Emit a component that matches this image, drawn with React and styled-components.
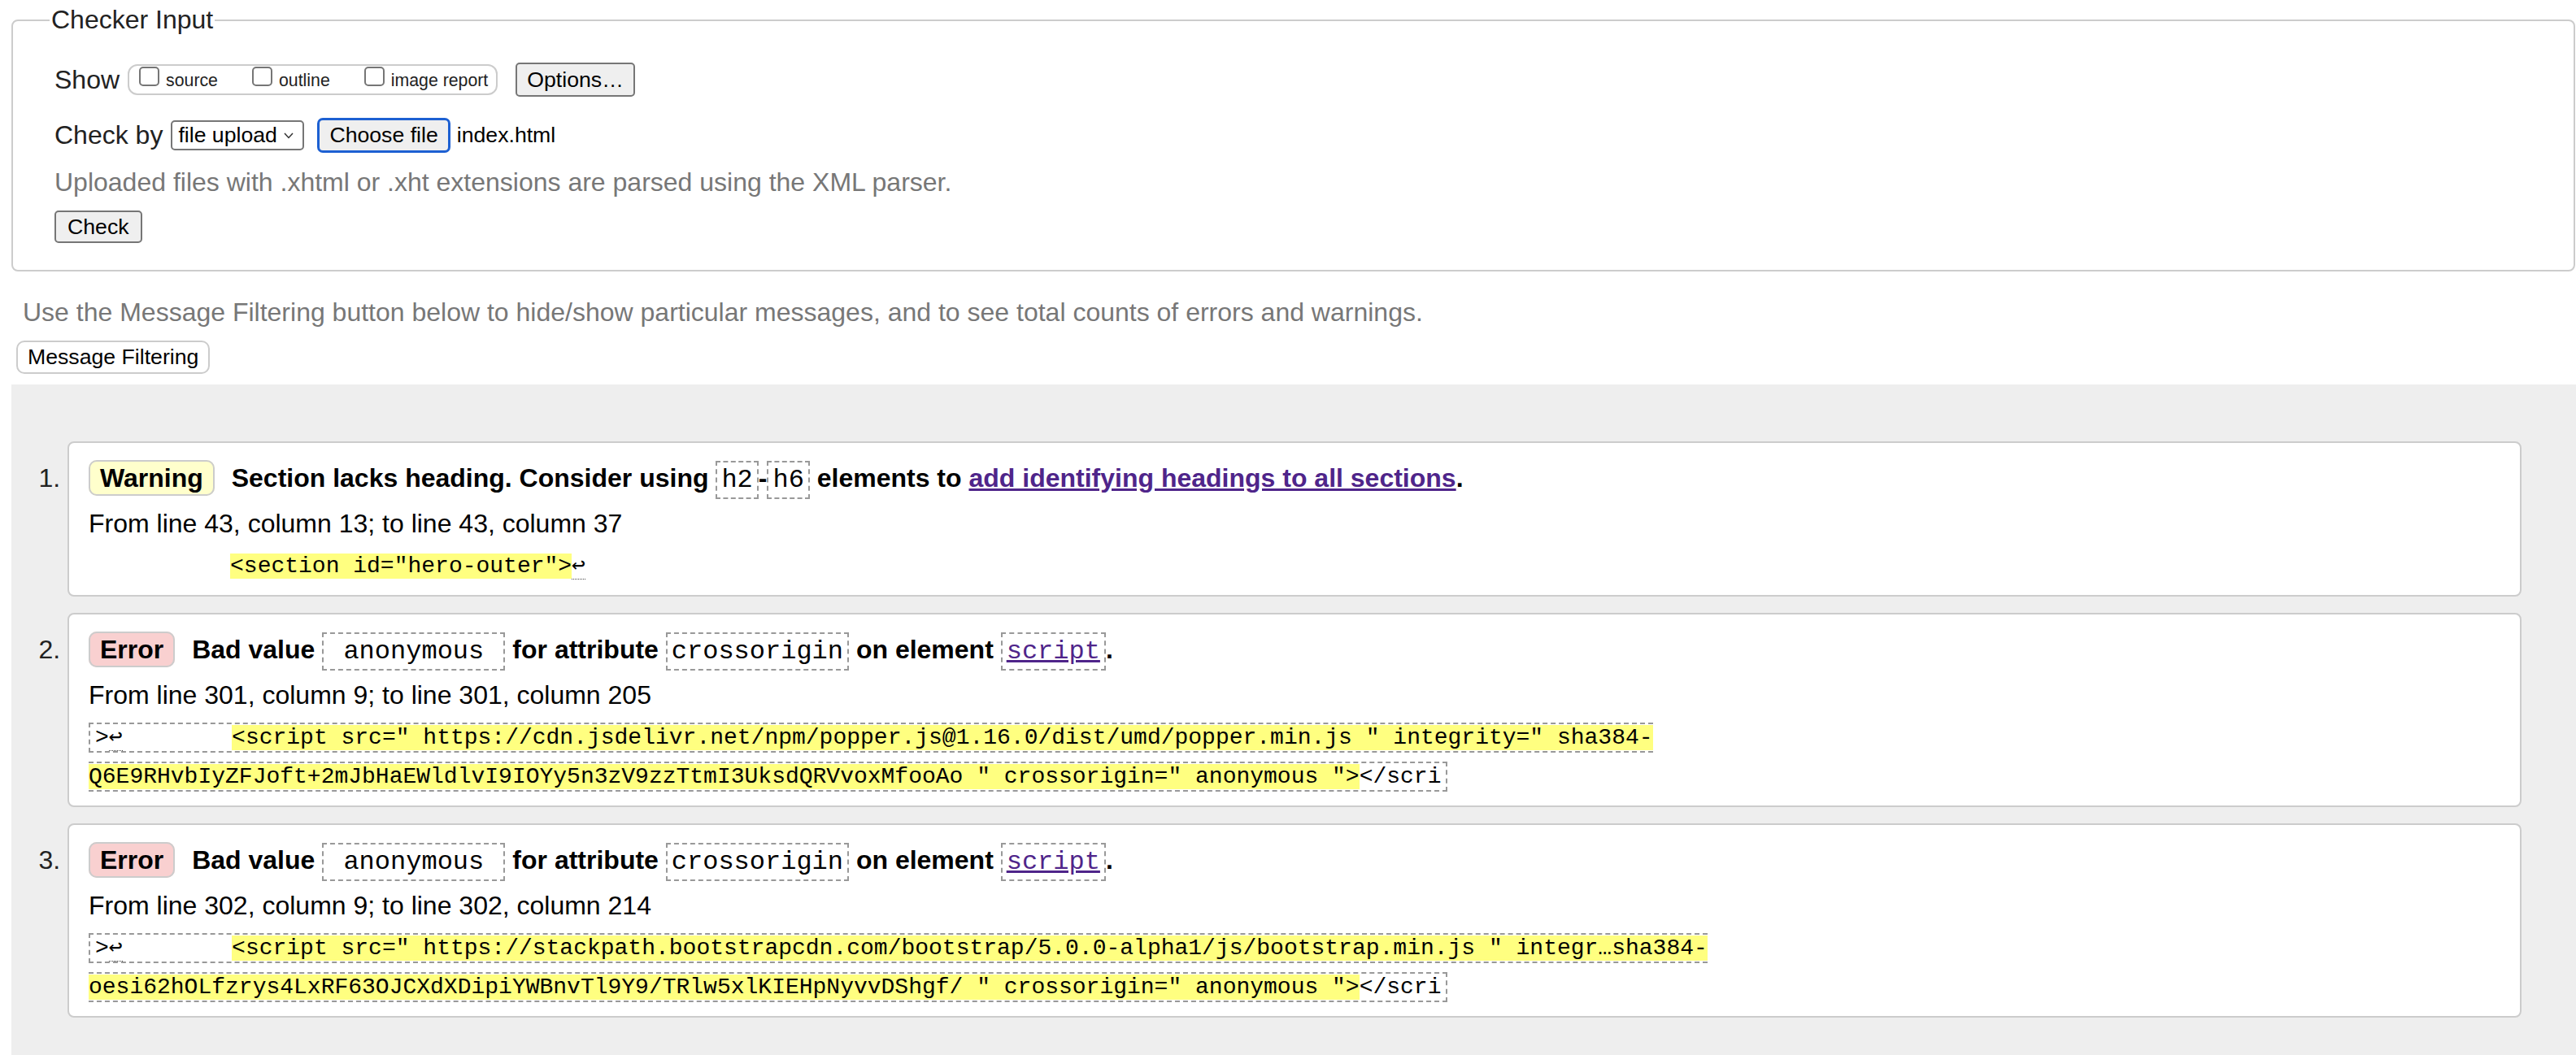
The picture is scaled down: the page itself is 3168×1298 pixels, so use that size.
import React from 'react';
import styled, { createGlobalStyle } from 'styled-components';

const GlobalStyle = createGlobalStyle`
  html, body {
    margin: 0;
    padding: 0;
    background: #fff;
  }
  body {
    font-family: "Liberation Sans", Arial, Helvetica, sans-serif;
    font-size: 32px;
    color: #222;
  }
`;

const MONO = '"Liberation Mono", "DejaVu Sans Mono", monospace';

const Page = styled.div`
  display: flex;
  flex-direction: column;
  padding: 6px 0 0 14px;
`;

// Checker input form
const InputFieldset = styled.fieldset`
  margin: 0 1px 0 0;
  padding: 34px 0 33px 51px;
  border: 2px solid #ccc;
  border-radius: 8px;
  min-width: 0;
`;

const Legend = styled.legend`
  margin-left: -6px;
  padding: 0 2px;
  font-size: 32px;
  line-height: 37px;
`;

const FormRow = styled.div`
  display: flex;
  align-items: center;
  height: ${({ h }) => h}px;
  margin-bottom: ${({ mb }) => mb || 0}px;
`;

const RowLabel = styled.span`
  font-size: 32px;
  line-height: 37px;
  margin-right: ${({ gap }) => gap}px;
`;

const CheckGroup = styled.div`
  display: flex;
  align-items: flex-start;
  box-sizing: border-box;
  height: 38px;
  padding: 1px 10px 0 12px;
  border: 2px solid #ccc;
  border-radius: 12px;
`;

const CheckLabel = styled.label`
  display: flex;
  align-items: flex-start;
  margin-right: ${({ last }) => (last ? 0 : 42)}px;
  font-size: 21.3px;
  line-height: 24px;
  color: #222;
`;

const CheckBox = styled.span`
  display: block;
  box-sizing: border-box;
  width: 25px;
  height: 24px;
  margin-right: 8px;
  border: 2px solid #767676;
  border-radius: 5px;
  background: #fff;
`;

const CheckText = styled.span`
  margin-top: 5px;
`;

const NativeButton = styled.button`
  box-sizing: border-box;
  height: ${({ h }) => h}px;
  margin-left: ${({ ml }) => ml || 0}px;
  padding: 0 ${({ px }) => px || 12}px;
  font-family: "Liberation Sans", Arial, sans-serif;
  font-size: 26.67px;
  color: #000;
  background: #efefef;
  border: 2px solid #767676;
  border-radius: 5px;
`;

const FocusButton = styled(NativeButton)`
  border: 3px solid #1d60d2;
  border-radius: 7px;
`;

const SelectBox = styled.div`
  display: flex;
  align-items: center;
  justify-content: space-between;
  box-sizing: border-box;
  width: 164px;
  height: 37px;
  padding: 0 11px 0 7px;
  border: 2px solid #767676;
  border-radius: 5px;
  background: #fff;
  font-size: 26.67px;
  color: #000;
`;

const FileName = styled.span`
  margin-left: 8px;
  font-size: 26.67px;
  color: #000;
`;

const Hint = styled.div`
  font-size: 32px;
  line-height: 37px;
  color: #777;
  margin-bottom: ${({ mb }) => mb}px;
`;

// Message filtering
const FilterNote = styled.p`
  margin: 32px 0 0 14px;
  font-size: 32px;
  line-height: 37px;
  color: #777;
`;

const FilterButton = styled.button`
  align-self: flex-start;
  box-sizing: border-box;
  height: 41px;
  margin: 16px 0 13px 6px;
  padding: 0 12px;
  font-family: "Liberation Sans", Arial, sans-serif;
  font-size: 26.67px;
  color: #000;
  background: #fff;
  border: 2px solid #ccc;
  border-radius: 10px;
`;

// Results
const Results = styled.div`
  box-sizing: border-box;
  min-height: 823px;
  padding: 70px 67px 40px 69px;
  background: #eee;
`;

const MessageList = styled.ol`
  margin: 0;
  padding: 0;
  list-style: decimal outside;
`;

const Card = styled.li`
  margin-bottom: 20px;
  padding: 19px 24px 11px;
  background: #fff;
  border: 2px solid #ccc;
  border-radius: 8px;
  color: #000;
  font-size: 32px;

  &::marker {
    color: #222;
  }
`;

const Heading = styled.p`
  margin: 0;
  font-weight: bold;
  line-height: 48px;
`;

const Badge = styled.strong`
  margin-right: 12px;
  padding: 2px 12px;
  background: ${({ kind }) => (kind === 'error' ? '#f9d0d0' : '#ffffcc')};
  border: 2px solid #ccc;
  border-radius: 10px;
`;

const Code = styled.code`
  padding: 3px 5px;
  font-family: ${MONO};
  font-size: 32px;
  font-weight: normal;
  white-space: pre;
  border: 2px dashed #999;
`;

const Link = styled.a`
  color: #4f258a;
  text-decoration: underline;
`;

const Location = styled.p`
  margin: 5px 0 0;
  line-height: 48px;
`;

const Extract = styled.p`
  margin: 5px 0 0;
  font-family: ${MONO};
  font-size: 28px;
  line-height: 48px;
  white-space: pre;
`;

const ExtractBox = styled.code`
  font-family: inherit;
  padding: 1px 6px;
  border: ${({ framed }) => (framed ? '2px dashed #999' : 'none')};
`;

const Mark = styled.b`
  font-weight: normal;
  background: #ffff80;
`;

const LineFeed = styled.span`
  border-bottom: 1px dotted #444;
`;

const Chevron = () => (
  <svg width="12" height="8" viewBox="0 0 12 8">
    <polyline points="1,1 6,6.5 11,1" fill="none" stroke="#333" strokeWidth="1.5" />
  </svg>
);

const crossOriginErrors = [
  {
    from: 'From line 301, column 9; to line 301, column 205',
    first: '<script src=" https://cdn.jsdelivr.net/npm/popper.js@1.16.0/dist/umd/popper.min.js " integrity=" sha384-',
    second: 'Q6E9RHvbIyZFJoft+2mJbHaEWldlvI9IOYy5n3zV9zzTtmI3UksdQRVvoxMfooAo " crossorigin=" anonymous ">',
  },
  {
    from: 'From line 302, column 9; to line 302, column 214',
    first: '<script src=" https://stackpath.bootstrapcdn.com/bootstrap/5.0.0-alpha1/js/bootstrap.min.js " integr\u2026sha384-',
    second: 'oesi62hOLfzrys4LxRF63OJCXdXDipiYWBnvTl9Y9/TRlw5xlKIEHpNyvvDShgf/ " crossorigin=" anonymous ">',
  },
];

const App = () => {
  return (
    <Page>
      <GlobalStyle />
      <InputFieldset>
        <Legend>Checker Input</Legend>

        <FormRow h={42} mb={26}>
          <RowLabel gap={10}>Show</RowLabel>
          <CheckGroup>
            <CheckLabel>
              <CheckBox />
              <CheckText>source</CheckText>
            </CheckLabel>
            <CheckLabel>
              <CheckBox />
              <CheckText>outline</CheckText>
            </CheckLabel>
            <CheckLabel last>
              <CheckBox />
              <CheckText>image report</CheckText>
            </CheckLabel>
          </CheckGroup>
          <NativeButton h={42} ml={22}>Options…</NativeButton>
        </FormRow>

        <FormRow h={43} mb={18}>
          <RowLabel gap={10}>Check by</RowLabel>
          <SelectBox>
            <span>file upload</span>
            <Chevron />
          </SelectBox>
          <FocusButton h={43} ml={16} px={12}>Choose file</FocusButton>
          <FileName>index.html</FileName>
        </FormRow>

        <Hint mb={16}>Uploaded files with .xhtml or .xht extensions are parsed using the XML parser.</Hint>

        <FormRow h={40}>
          <NativeButton h={40} px={14}>Check</NativeButton>
        </FormRow>
      </InputFieldset>

      <FilterNote>
        Use the Message Filtering button below to hide/show particular messages, and to see total counts of errors and warnings.
      </FilterNote>
      <FilterButton>Message Filtering</FilterButton>

      <Results>
        <MessageList>
          <Card>
            <Heading>
              <Badge kind="warning">Warning</Badge> Section lacks heading. Consider using <Code>h2</Code>-<Code>h6</Code> elements to{' '}
              <Link href="#">add identifying headings to all sections</Link>.
            </Heading>
            <Location>From line 43, column 13; to line 43, column 37</Location>
            <Extract>
              <ExtractBox>
                {'          '}
                <Mark>{'<section id="hero-outer">'}</Mark>
                <LineFeed>↩</LineFeed>
              </ExtractBox>
            </Extract>
          </Card>

          {crossOriginErrors.map((err) => (
            <Card key={err.from}>
              <Heading>
                <Badge kind="error">Error</Badge> Bad value <Code>{' anonymous '}</Code> for attribute <Code>crossorigin</Code> on element{' '}
                <Code><Link href="#">script</Link></Code>.
              </Heading>
              <Location>{err.from}</Location>
              <Extract>
                <ExtractBox framed>
                  {'>'}
                  <LineFeed>↩</LineFeed>
                  {'        '}
                  <Mark>
                    {err.first}
                    <br />
                    {err.second}
                  </Mark>
                  {'</scri'}
                </ExtractBox>
              </Extract>
            </Card>
          ))}
        </MessageList>
      </Results>
    </Page>
  );
};

export default App;
